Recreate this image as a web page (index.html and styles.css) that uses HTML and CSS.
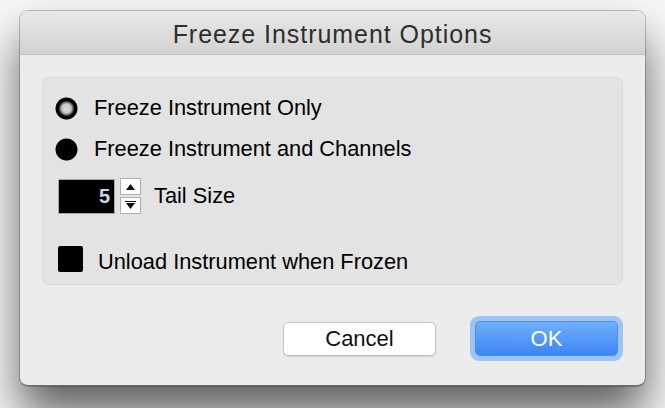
FILE: index.html
```html
<!DOCTYPE html>
<html>
<head>
<meta charset="utf-8">
<link rel="stylesheet" href="styles.css">
</head>
<body>
<div class="window">
  <div class="titlebar">Freeze Instrument Options</div>
  <div class="content">
    <div class="panel">
      <div class="row radio-row first">
        <span class="radio radio-off"></span>
        <span class="label">Freeze Instrument Only</span>
      </div>
      <div class="row radio-row second">
        <span class="radio radio-on"></span>
        <span class="label">Freeze Instrument and Channels</span>
      </div>
      <div class="row stepper-row">
        <div class="numfield">5</div>
        <div class="stepper">
          <div class="step step-up"><svg width="11" height="8" viewBox="0 0 11 8"><path d="M5.5 1 L10 7 L1 7 Z" fill="#111"/></svg></div>
          <div class="step step-down"><svg width="11" height="8" viewBox="0 0 11 8"><path d="M1 1 L10 1 L5.5 7 Z" fill="#111"/></svg></div>
        </div>
        <span class="label tail">Tail Size</span>
      </div>
      <div class="row check-row">
        <span class="checkbox"></span>
        <span class="label">Unload Instrument when Frozen</span>
      </div>
    </div>
    <div class="buttons">
      <button class="btn cancel">Cancel</button>
      <div class="focusring"><button class="btn ok">OK</button></div>
    </div>
  </div>
</div>
</body>
</html>
```
FILE: styles.css
```css
html, body {
  margin: 0;
  padding: 0;
}
body {
  width: 665px;
  height: 408px;
  overflow: hidden;
  background: #f7f7f7;
  font-family: "Liberation Sans", Arial, sans-serif;
  padding-top: 11px;
  padding-left: 20px;
  box-sizing: border-box;
}
.window {
  width: 625px;
  height: 375px;
  border-radius: 8px;
  background: #ececec;
  box-shadow: 0 0 0 1px rgba(0,0,0,0.22), 0 28px 46px rgba(0,0,0,0.62);
  overflow: hidden;
  display: flex;
  flex-direction: column;
  border-bottom: 1px solid #6e6e6e;
  box-sizing: border-box;
}
.titlebar {
  height: 44px;
  flex: none;
  box-sizing: border-box;
  background: linear-gradient(#e9e9e9, #d2d2d2);
  border-bottom: 1px solid #c2c2c2;
  text-align: center;
  font-size: 25px;
  line-height: 46px;
  color: #2e2e2e;
  letter-spacing: 0.95px;
}
.content {
  flex: 1;
  padding: 22px 22px 0 22px;
}
.panel {
  height: 208px;
  box-sizing: border-box;
  background: #e3e3e3;
  border: 1px solid #dadada;
  border-radius: 6px;
  padding-top: 15px;
}
.row {
  display: flex;
  align-items: center;
}
.label {
  font-size: 21.8px;
  color: #000;
}
.radio-row {
  height: 30px;
  padding-left: 12px;
}
.radio-row.second {
  margin-top: 11px;
}
.radio {
  width: 23px;
  height: 23px;
  border-radius: 50%;
  margin-right: 16px;
  filter: blur(0.7px);
}
.radio-off {
  background: radial-gradient(circle, #dadada 0, #c8c8c8 4.5px, #666 6.5px, #000 8px, #000 10.5px, rgba(0,0,0,0) 11.5px);
}
.radio-on {
  background: radial-gradient(circle, #000 0, #000 10.5px, rgba(0,0,0,0) 11.5px);
}
.stepper-row {
  margin-top: 14px;
  height: 36px;
  padding-left: 15px;
}
.numfield {
  width: 57px;
  height: 35px;
  box-sizing: border-box;
  background: #000;
  border: 1px solid #a9a9a9;
  color: #c8d8ea;
  font-weight: bold;
  font-size: 20px;
  text-align: right;
  padding-right: 4px;
  line-height: 33px;
}
.stepper {
  margin-left: 5px;
  width: 21px;
  height: 36px;
  display: flex;
  flex-direction: column;
  gap: 2px;
}
.step {
  flex: 1;
  background: #fff;
  border: 1px solid #b0b0b0;
  display: flex;
  align-items: center;
  justify-content: center;
}
.step-down svg {
  border-top: 1px solid #111;
}
.tail {
  margin-left: 13px;
}
.check-row {
  margin-top: 30px;
  height: 30px;
  padding-left: 15px;
}
.checkbox {
  width: 25px;
  height: 26px;
  background: #000;
  border-radius: 2px;
  filter: blur(0.7px);
  margin-right: 15px;
}
.check-row .label {
  margin-top: 5px;
}
.buttons {
  display: flex;
  justify-content: flex-end;
  align-items: center;
  margin-top: 31px;
  padding-right: 0;
}
.btn {
  font-family: "Liberation Sans", Arial, sans-serif;
  font-size: 22px;
  border-radius: 5px;
  padding: 0;
  margin: 0;
}
.cancel {
  width: 153px;
  height: 34px;
  background: #fff;
  border: 1px solid #c4c4c4;
  box-shadow: 0 1px 1px rgba(0,0,0,0.12);
  color: #111;
  margin-right: 34px;
}
.focusring {
  padding: 5px;
  border-radius: 9px;
  background: #9fc3f3;
}
.ok {
  display: block;
  width: 143px;
  height: 35px;
  border: 1px solid #4a8ee8;
  background: linear-gradient(#6fb0f9, #3c85f5);
  color: #fff;
}
```
